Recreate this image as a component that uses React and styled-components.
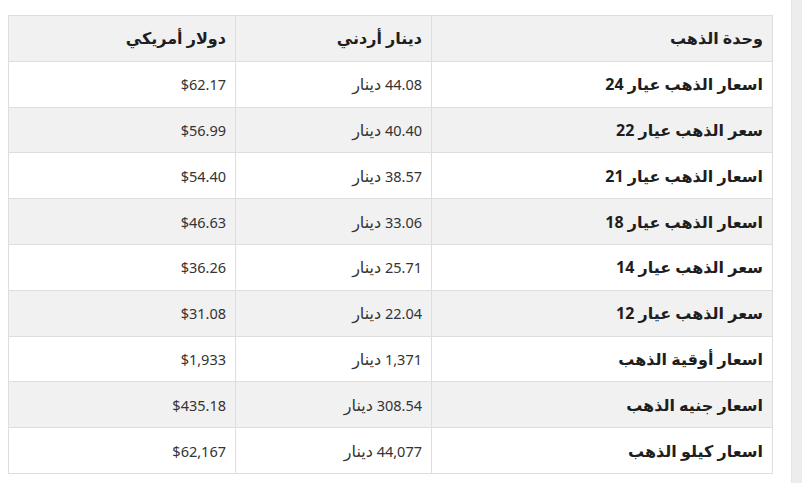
import styled, { createGlobalStyle } from 'styled-components';

const GlobalStyle = createGlobalStyle`
  html, body {
    margin: 0;
    padding: 0;
    background: #fff;
  }
  body {
    font-family: 'Noto Sans', 'DejaVu Sans', sans-serif;
    color: #222;
  }
`;

const Page = styled.div`
  display: flex;
  width: 802px;
  height: 483px;
  overflow: hidden;
`;

const Content = styled.main`
  flex: 1;
  min-width: 0;
  padding: 15px 0 0 8px;
`;

const SideTrack = styled.aside`
  width: 10px;
  background: #ededed;
  border-left: 1px solid #e4e4e4;
`;

const Table = styled.table`
  direction: rtl;
  width: 764px;
  border-collapse: collapse;
  table-layout: fixed;
`;

const HeadCell = styled.th`
  box-sizing: border-box;
  width: ${({ $w }) => $w}px;
  height: 45.8px;
  padding: 0 9px;
  text-align: right;
  font-weight: 700;
  font-size: 16px;
  color: #1e1e1e;
  background: #f1f1f1;
  border: 1px solid #dedede;
`;

const Row = styled.tr`
  background: ${({ $alt }) => ($alt ? '#f1f1f1' : '#fff')};
`;

const Cell = styled.td`
  box-sizing: border-box;
  height: 45.8px;
  padding: 0 9px;
  text-align: right;
  border: 1px solid #dedede;
  white-space: nowrap;
  color: ${({ $label }) => ($label ? '#1e1e1e' : '#333')};
  font-weight: ${({ $label }) => ($label ? 700 : 400)};
  font-size: ${({ $label }) => ($label ? '16px' : '14.5px')};
`;

const Unit = styled.span`
  font-size: 16px;
`;

const rows = [
  { label: 'اسعار الذهب عيار 24', jod: '44.08', usd: '$62.17' },
  { label: 'سعر الذهب عيار 22', jod: '40.40', usd: '$56.99' },
  { label: 'اسعار الذهب عيار 21', jod: '38.57', usd: '$54.40' },
  { label: 'اسعار الذهب عيار 18', jod: '33.06', usd: '$46.63' },
  { label: 'سعر الذهب عيار 14', jod: '25.71', usd: '$36.26' },
  { label: 'سعر الذهب عيار 12', jod: '22.04', usd: '$31.08' },
  { label: 'اسعار أوقية الذهب', jod: '1,371', usd: '$1,933' },
  { label: 'اسعار جنيه الذهب', jod: '308.54', usd: '$435.18' },
  { label: 'اسعار كيلو الذهب', jod: '44,077', usd: '$62,167' },
];

export default function App() {
  return (
    <>
      <GlobalStyle />
      <Page>
        <Content>
          <Table>
            <thead>
              <tr>
                <HeadCell $w={341}>وحدة الذهب</HeadCell>
                <HeadCell $w={196}>دينار أردني</HeadCell>
                <HeadCell $w={227}>دولار أمريكي</HeadCell>
              </tr>
            </thead>
            <tbody>
              {rows.map((r, i) => (
                <Row key={r.label} $alt={i % 2 === 1}>
                  <Cell $label>{r.label}</Cell>
                  <Cell>
                    {r.jod} <Unit>دينار</Unit>
                  </Cell>
                  <Cell dir="ltr">{r.usd}</Cell>
                </Row>
              ))}
            </tbody>
          </Table>
        </Content>
        <SideTrack />
      </Page>
    </>
  );
}
